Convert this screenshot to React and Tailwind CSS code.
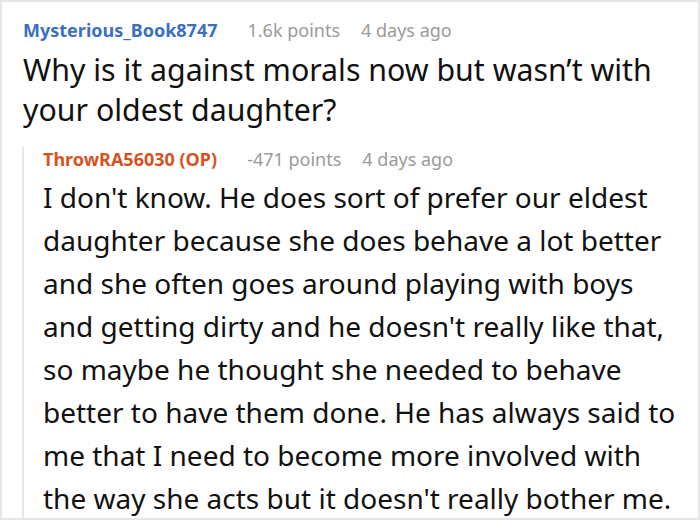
export default function App() {
  return (
    <div className="w-[700px] h-[520px] overflow-hidden border-2 border-[#e6e6e6] bg-white" style={{ fontFamily: '"Noto Sans", "Open Sans", sans-serif' }}>
      <div className="pl-[21px] pr-2 pt-[16px]">
        <div className="flex items-center text-[18px] leading-[24px]">
          <span className="font-bold text-[#3b6fc0]">Mysterious_Book8747</span>
          <span className="ml-[30px] text-[#9a9a9a]">1.6k points</span>
          <span className="ml-[21px] text-[#9a9a9a]">4 days ago</span>
        </div>
        <p className="mt-[8px] text-[30.3px] leading-[40px] text-[#111]">
          Why is it against morals now but wasn’t with your oldest daughter?
        </p>
        <div className="mt-[17px] -ml-[1px] border-l-2 border-[#e6e6e6] pl-[19px]">
          <div className="flex items-center text-[18px] leading-[24px]">
            <span className="font-bold text-[#d6531f]">ThrowRA56030 (OP)</span>
            <span className="ml-[30px] text-[#9a9a9a]">-471 points</span>
            <span className="ml-[21px] text-[#9a9a9a]">4 days ago</span>
          </div>
          <p className="mt-[5px] text-[28px] leading-[43px] text-[#111]">
            I don't know. He does sort of prefer our eldest daughter because she does behave a lot better and she often goes around playing with boys and getting dirty and he doesn't really like that, so maybe he thought she needed to behave better to have them done. He has always said to me that I need to become more involved with the way she acts but it doesn't really bother me.
          </p>
        </div>
      </div>
    </div>
  );
}
